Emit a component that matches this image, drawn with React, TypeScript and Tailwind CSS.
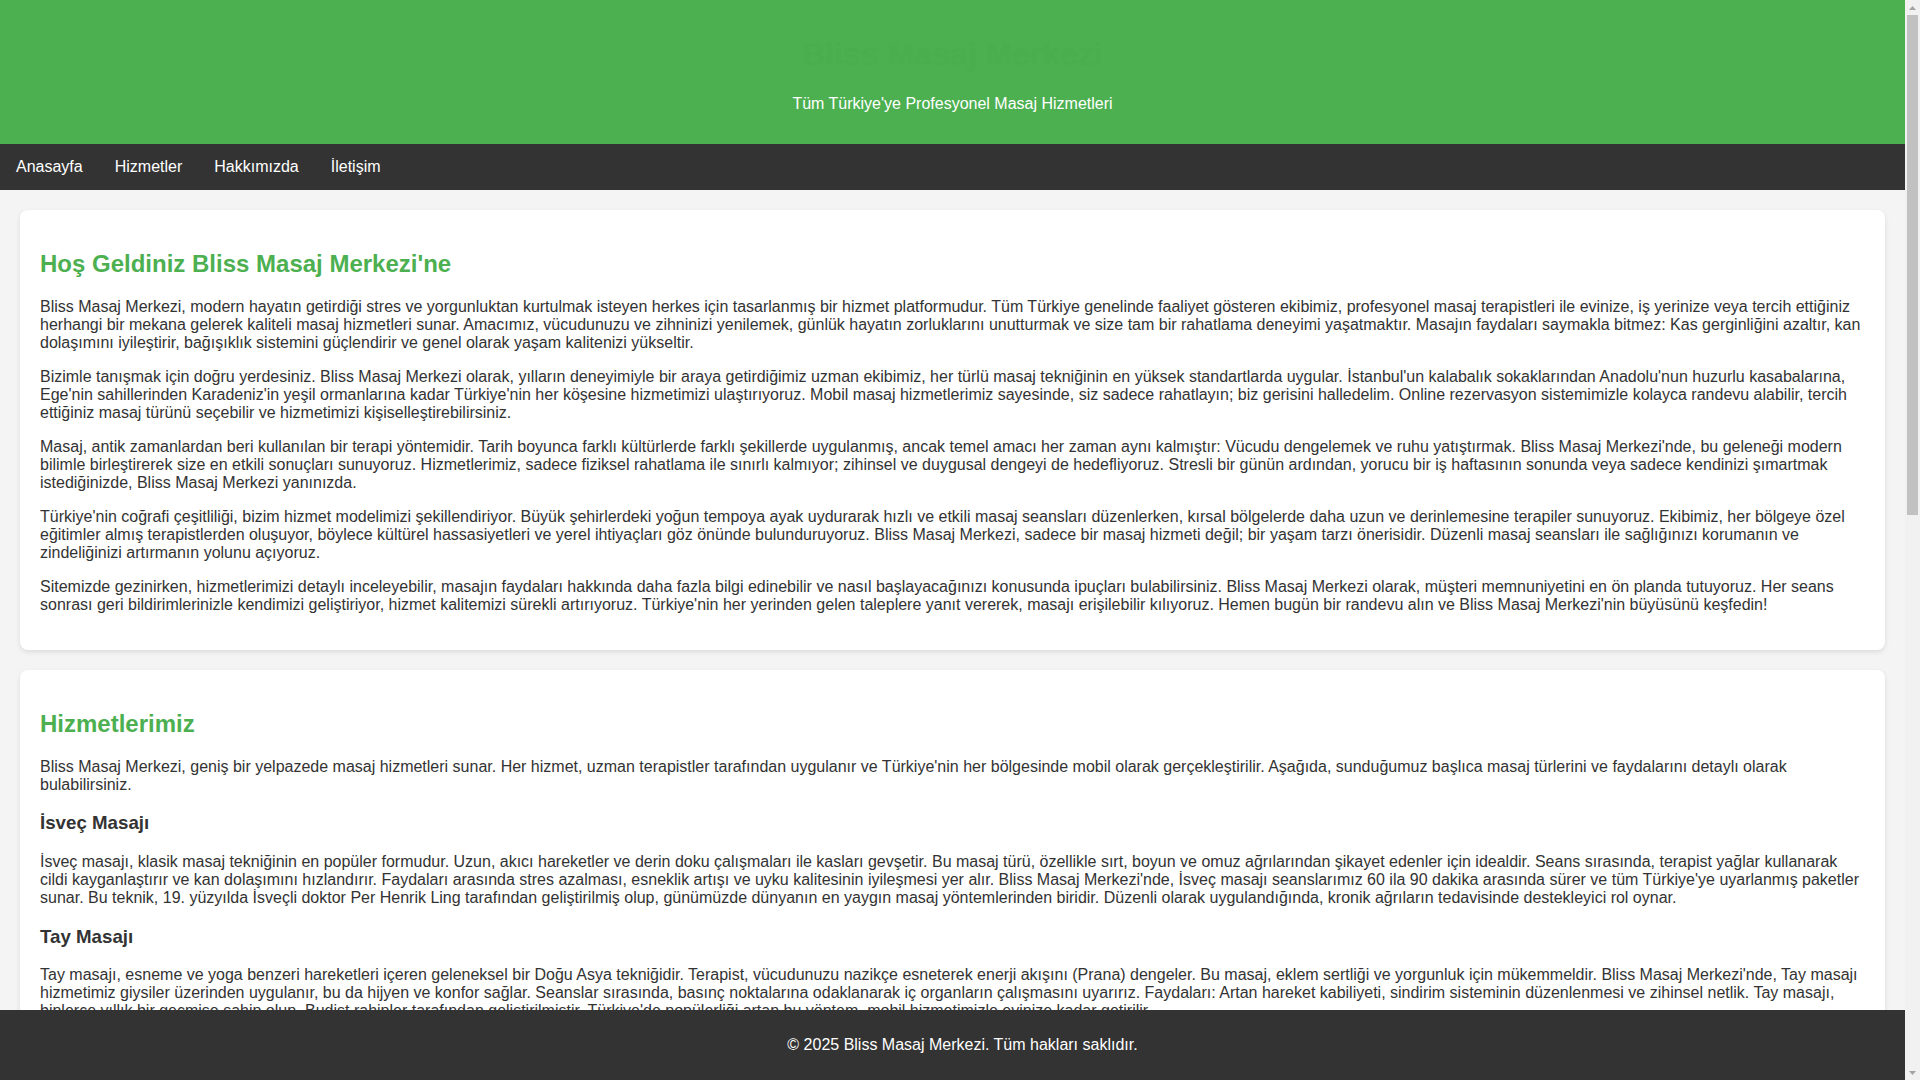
const intro = [
  "Bliss Masaj Merkezi, modern hayatın getirdiği stres ve yorgunluktan kurtulmak isteyen herkes için tasarlanmış bir hizmet platformudur. Tüm Türkiye genelinde faaliyet gösteren ekibimiz, profesyonel masaj terapistleri ile evinize, iş yerinize veya tercih ettiğiniz herhangi bir mekana gelerek kaliteli masaj hizmetleri sunar. Amacımız, vücudunuzu ve zihninizi yenilemek, günlük hayatın zorluklarını unutturmak ve size tam bir rahatlama deneyimi yaşatmaktır. Masajın faydaları saymakla bitmez: Kas gerginliğini azaltır, kan dolaşımını iyileştirir, bağışıklık sistemini güçlendirir ve genel olarak yaşam kalitenizi yükseltir.",
  "Bizimle tanışmak için doğru yerdesiniz. Bliss Masaj Merkezi olarak, yılların deneyimiyle bir araya getirdiğimiz uzman ekibimiz, her türlü masaj tekniğinin en yüksek standartlarda uygular. İstanbul'un kalabalık sokaklarından Anadolu'nun huzurlu kasabalarına, Ege'nin sahillerinden Karadeniz'in yeşil ormanlarına kadar Türkiye'nin her köşesine hizmetimizi ulaştırıyoruz. Mobil masaj hizmetlerimiz sayesinde, siz sadece rahatlayın; biz gerisini halledelim. Online rezervasyon sistemimizle kolayca randevu alabilir, tercih ettiğiniz masaj türünü seçebilir ve hizmetimizi kişiselleştirebilirsiniz.",
  "Masaj, antik zamanlardan beri kullanılan bir terapi yöntemidir. Tarih boyunca farklı kültürlerde farklı şekillerde uygulanmış, ancak temel amacı her zaman aynı kalmıştır: Vücudu dengelemek ve ruhu yatıştırmak. Bliss Masaj Merkezi'nde, bu geleneği modern bilimle birleştirerek size en etkili sonuçları sunuyoruz. Hizmetlerimiz, sadece fiziksel rahatlama ile sınırlı kalmıyor; zihinsel ve duygusal dengeyi de hedefliyoruz. Stresli bir günün ardından, yorucu bir iş haftasının sonunda veya sadece kendinizi şımartmak istediğinizde, Bliss Masaj Merkezi yanınızda.",
  "Türkiye'nin coğrafi çeşitliliği, bizim hizmet modelimizi şekillendiriyor. Büyük şehirlerdeki yoğun tempoya ayak uydurarak hızlı ve etkili masaj seansları düzenlerken, kırsal bölgelerde daha uzun ve derinlemesine terapiler sunuyoruz. Ekibimiz, her bölgeye özel eğitimler almış terapistlerden oluşuyor, böylece kültürel hassasiyetleri ve yerel ihtiyaçları göz önünde bulunduruyoruz. Bliss Masaj Merkezi, sadece bir masaj hizmeti değil; bir yaşam tarzı önerisidir. Düzenli masaj seansları ile sağlığınızı korumanın ve zindeliğinizi artırmanın yolunu açıyoruz.",
  "Sitemizde gezinirken, hizmetlerimizi detaylı inceleyebilir, masajın faydaları hakkında daha fazla bilgi edinebilir ve nasıl başlayacağınızı konusunda ipuçları bulabilirsiniz. Bliss Masaj Merkezi olarak, müşteri memnuniyetini en ön planda tutuyoruz. Her seans sonrası geri bildirimlerinizle kendimizi geliştiriyor, hizmet kalitemizi sürekli artırıyoruz. Türkiye'nin her yerinden gelen taleplere yanıt vererek, masajı erişilebilir kılıyoruz. Hemen bugün bir randevu alın ve Bliss Masaj Merkezi'nin büyüsünü keşfedin!",
]

const services = [
  {
    title: 'İsveç Masajı',
    text: "İsveç masajı, klasik masaj tekniğinin en popüler formudur. Uzun, akıcı hareketler ve derin doku çalışmaları ile kasları gevşetir. Bu masaj türü, özellikle sırt, boyun ve omuz ağrılarından şikayet edenler için idealdir. Seans sırasında, terapist yağlar kullanarak cildi kayganlaştırır ve kan dolaşımını hızlandırır. Faydaları arasında stres azalması, esneklik artışı ve uyku kalitesinin iyileşmesi yer alır. Bliss Masaj Merkezi'nde, İsveç masajı seanslarımız 60 ila 90 dakika arasında sürer ve tüm Türkiye'ye uyarlanmış paketler sunar. Bu teknik, 19. yüzyılda İsveçli doktor Per Henrik Ling tarafından geliştirilmiş olup, günümüzde dünyanın en yaygın masaj yöntemlerinden biridir. Düzenli olarak uygulandığında, kronik ağrıların tedavisinde destekleyici rol oynar.",
  },
  {
    title: 'Tay Masajı',
    text: "Tay masajı, esneme ve yoga benzeri hareketleri içeren geleneksel bir Doğu Asya tekniğidir. Terapist, vücudunuzu nazikçe esneterek enerji akışını (Prana) dengeler. Bu masaj, eklem sertliği ve yorgunluk için mükemmeldir. Bliss Masaj Merkezi'nde, Tay masajı hizmetimiz giysiler üzerinden uygulanır, bu da hijyen ve konfor sağlar. Seanslar sırasında, basınç noktalarına odaklanarak iç organların çalışmasını uyarırız. Faydaları: Artan hareket kabiliyeti, sindirim sisteminin düzenlenmesi ve zihinsel netlik. Tay masajı, binlerce yıllık bir geçmişe sahip olup, Budist rahipler tarafından geliştirilmiştir. Türkiye'de popülerliği artan bu yöntem, mobil hizmetimizle evinize kadar getirilir.",
  },
  {
    title: 'Derin Doku Masajı',
    text: "Derin doku masajı, kasların ve bağ dokusunun derin katmanlarına odaklanan yoğun bir tekniktir. Kronik kas ağrıları, sporcu sakatlıkları ve duruş bozuklukları için etkili bir çözümdür. Terapistlerimiz, yavaş ve güçlü hareketlerle kas düğümlerini çözer ve dokulardaki gerginliği azaltır. Bliss Masaj Merkezi'nde bu hizmet, kişisel ihtiyaçlarınıza göre planlanır ve seans öncesinde detaylı bir değerlendirme yapılır.",
  },
]

function Card({ title, children }: { title: string; children: React.ReactNode }) {
  return (
    <section className="bg-white rounded-lg p-5 shadow-[0_2px_5px_rgba(0,0,0,0.1)]">
      <h2 className="text-[24px] font-bold leading-[normal] my-[19.92px] text-[#4caf50]">{title}</h2>
      {children}
    </section>
  )
}

// Classic page scrollbar as drawn in the screenshot
function Scrollbar() {
  return (
    <div className="w-[15px] shrink-0 bg-[#f1f1f1] flex flex-col">
      <div className="h-[15px] flex items-center justify-center">
        <svg width="7" height="4" viewBox="0 0 7 4">
          <path d="M3.5 0L7 4H0z" fill="#a3a3a3" />
        </svg>
      </div>
      <div className="flex-1 px-[2px]">
        <div className="h-[500px] bg-[#c1c1c1]" />
      </div>
      <div className="h-[15px] flex items-center justify-center">
        <svg width="7" height="4" viewBox="0 0 7 4">
          <path d="M0 0H7L3.5 4z" fill="#a3a3a3" />
        </svg>
      </div>
    </div>
  )
}

export default function App() {
  const nav = ['Anasayfa', 'Hizmetler', 'Hakkımızda', 'İletişim']

  return (
    <div className="h-screen flex overflow-hidden font-['Liberation_Sans',Arial,sans-serif] text-[16px] text-[#333] leading-[normal]">
      <div className="flex-1 min-w-0 flex flex-col">
        <div className="flex-1 overflow-hidden bg-[#f4f4f4]">
          {/* Header */}
          <header className="bg-[#4caf50] text-white text-center py-[15px]">
            <h1 className="text-[32px] font-bold leading-[normal] my-[21.44px] text-[#4aad4e]">Bliss Masaj Merkezi</h1>
            <p className="my-4">Tüm Türkiye'ye Profesyonel Masaj Hizmetleri</p>
          </header>

          {/* Nav */}
          <nav className="bg-[#333]">
            <ul className="flex">
              {nav.map((item) => (
                <li key={item}>
                  <a href="#" className="block px-4 py-[14px] text-white">
                    {item}
                  </a>
                </li>
              ))}
            </ul>
          </nav>

          {/* Content */}
          <main className="p-5 flex flex-col gap-5">
            <Card title="Hoş Geldiniz Bliss Masaj Merkezi'ne">
              {intro.map((t, i) => (
                <p key={i} className="my-4">{t}</p>
              ))}
            </Card>

            <Card title="Hizmetlerimiz">
              <p className="my-4">
                Bliss Masaj Merkezi, geniş bir yelpazede masaj hizmetleri sunar. Her hizmet, uzman terapistler tarafından uygulanır ve Türkiye'nin her bölgesinde mobil olarak gerçekleştirilir. Aşağıda, sunduğumuz başlıca masaj türlerini ve faydalarını detaylı olarak bulabilirsiniz.
              </p>
              {services.map((s) => (
                <div key={s.title}>
                  <h3 className="text-[18.72px] font-bold leading-[normal] my-[18.72px]">{s.title}</h3>
                  <p className="my-4">{s.text}</p>
                </div>
              ))}
            </Card>
          </main>
        </div>

        <footer className="h-[70px] shrink-0 bg-[#333] text-white flex items-center justify-center pl-5">
          <p>© 2025 Bliss Masaj Merkezi. Tüm hakları saklıdır.</p>
        </footer>
      </div>

      <Scrollbar />
    </div>
  )
}
